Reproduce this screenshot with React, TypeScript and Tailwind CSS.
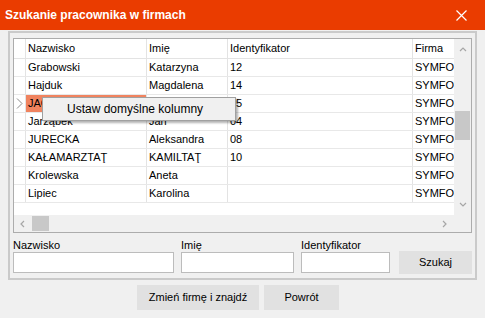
import React from "react";

const rows = [
  ["Grabowski", "Katarzyna", "12", "SYMFONIA"],
  ["Hajduk", "Magdalena", "14", "SYMFONIA"],
  ["JACKOWSKI", "Anna", "15", "SYMFONIA"],
  ["Jarząbek", "Jan", "04", "SYMFONIA"],
  ["JURECKA", "Aleksandra", "08", "SYMFONIA"],
  ["KAŁAMARZTAŢ", "KAMILTAŢ", "10", "SYMFONIA"],
  ["Krolewska", "Aneta", "", "SYMFONIA"],
  ["Lipiec", "Karolina", "", "SYMFONIA"],
];

const widths = ["w-[121px]", "w-[81px]", "w-[185px]", "w-[41px]"];

function Chevron({ dir }: { dir: "up" | "down" | "left" | "right" }) {
  const d =
    dir === "up"
      ? "M1 5 L4 2 L7 5"
      : dir === "down"
      ? "M1 2 L4 5 L7 2"
      : dir === "left"
      ? "M5 1 L2 4 L5 7"
      : "M2 1 L5 4 L2 7";
  return (
    <svg width="8" height="8" viewBox="0 0 8 8">
      <path d={d} fill="none" stroke="#a6a6a6" strokeWidth="1.2" />
    </svg>
  );
}

export default function App() {
  return (
    <div
      className="w-[485px] h-[318px] bg-[#f0f0f0] flex flex-col overflow-hidden text-black"
      style={{ fontFamily: '"Liberation Sans", Arial, sans-serif' }}
    >
      {/* Title bar */}
      <div className="h-[30px] bg-[#ea3c00] flex items-center justify-between pl-[5px] pr-[18px] shrink-0">
        <span className="text-white font-bold text-[12px] leading-none">Szukanie pracownika w firmach</span>
        <svg width="11" height="11" viewBox="0 0 11 11">
          <path d="M0.5 0.5 L10.5 10.5 M10.5 0.5 L0.5 10.5" stroke="white" strokeWidth="1.2" />
        </svg>
      </div>

      {/* Panel */}
      <div className="mt-[1px] ml-[8px] w-[469px] h-[249px] border-2 border-[#cacaca] pl-[3px] pt-[5px] flex flex-col">
        {/* Grid */}
        <div className="relative w-[459px] h-[195px] border border-[#acacac] bg-white flex flex-col text-[11px]">
          <div className="flex h-[176px]">
            <div className="w-[440px] flex flex-col">
              {/* header */}
              <div className="flex h-[20px] border-b border-[#e3e3e3]">
                <div className="w-[12px] border-r border-[#e3e3e3]" />
                {["Nazwisko", "Imię", "Identyfikator", "Firma"].map((h, i) => (
                  <div
                    key={h}
                    className={`${widths[i]} ${i < 3 ? "border-r border-[#e3e3e3]" : ""} pl-[2px] flex items-center overflow-hidden whitespace-nowrap`}
                  >
                    {h}
                  </div>
                ))}
              </div>
              {rows.map((r, ri) => (
                <div key={ri} className="flex h-[18px] border-b border-[#e8e8e8]">
                  <div className="w-[12px] border-r border-[#e3e3e3] flex items-center justify-center">
                    {ri === 2 && (
                      <svg width="7" height="11" viewBox="0 0 7 11">
                        <path d="M1 0.5 L6 5.5 L1 10.5" fill="none" stroke="#8a8a8a" strokeWidth="1" />
                      </svg>
                    )}
                  </div>
                  {r.map((c, ci) => (
                    <div
                      key={ci}
                      className={`${widths[ci]} ${ci < 3 ? "border-r border-[#e3e3e3]" : ""} ${
                        ri === 2 && ci === 0 ? "bg-[#f0835f]" : ""
                      } pl-[2px] flex items-center overflow-hidden whitespace-nowrap`}
                    >
                      {c}
                    </div>
                  ))}
                </div>
              ))}
            </div>
            {/* vertical scrollbar */}
            <div className="w-[17px] bg-[#f0f0f0] flex flex-col">
              <div className="h-[22px] flex items-center justify-center">
                <Chevron dir="up" />
              </div>
              <div className="flex-1 flex flex-col items-center">
                <div className="mt-[50px] w-[15px] h-[29px] bg-[#c8c8c8]" />
              </div>
              <div className="h-[20px] flex items-center justify-center">
                <Chevron dir="down" />
              </div>
            </div>
          </div>
          {/* horizontal scrollbar */}
          <div className="h-[17px] bg-[#f0f0f0] flex items-center">
            <div className="w-[18px] flex items-center justify-center">
              <Chevron dir="left" />
            </div>
            <div className="w-[17px] h-[15px] bg-[#c8c8c8]" />
            <div className="flex-1" />
            <div className="w-[18px] flex items-center justify-center">
              <Chevron dir="right" />
            </div>
            <div className="w-[17px]" />
          </div>

          {/* context menu */}
          <div className="absolute left-[28px] top-[58px] w-[194px] h-[24px] bg-[#f0f0f0] border border-[#a0a0a0] shadow-[2px_2px_2px_rgba(0,0,0,0.3)] flex items-center pl-[24px] text-[12px]">
            Ustaw domyślne kolumny
          </div>
        </div>

        {/* Search fields */}
        <div className="flex items-end mt-[5px] text-[11px]">
          <div className="flex flex-col w-[161px]">
            <span className="h-[14px] leading-[14px]">Nazwisko</span>
            <div className="h-[21px] bg-white border border-[#bcbcbc]" />
          </div>
          <div className="flex flex-col w-[113px] ml-[7px]">
            <span className="h-[14px] leading-[14px]">Imię</span>
            <div className="h-[21px] bg-white border border-[#bcbcbc]" />
          </div>
          <div className="flex flex-col w-[89px] ml-[7px]">
            <span className="h-[14px] leading-[14px]">Identyfikator</span>
            <div className="h-[21px] bg-white border border-[#bcbcbc]" />
          </div>
          <div className="ml-[9px] mb-[-1px] w-[73px] h-[23px] bg-[#e1e1e1] flex items-center justify-center text-[11px]">
            Szukaj
          </div>
        </div>
      </div>

      {/* Bottom buttons */}
      <div className="flex mt-[5px] ml-[137px] gap-[5px] text-[11px]">
        <div className="w-[122px] h-[25px] bg-[#e1e1e1] flex items-center justify-center">Zmień firmę i znajdź</div>
        <div className="w-[75px] h-[25px] bg-[#e1e1e1] flex items-center justify-center">Powrót</div>
      </div>
    </div>
  );
}
